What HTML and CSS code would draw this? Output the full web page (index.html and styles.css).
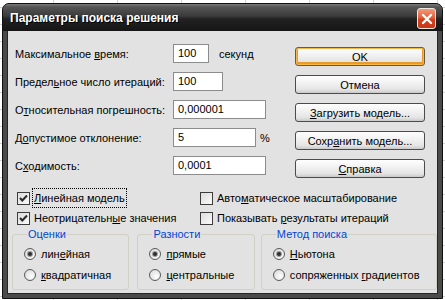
FILE: index.html
```html
<!DOCTYPE html>
<html lang="ru">
<head>
    <meta charset="UTF-8">
    <meta name="viewport" content="width=device-width, initial-scale=1.0">
    <title>Параметры поиска решения</title>
    <link rel="stylesheet" href="styles.css">
</head>
<body>

    <div class="window">
        <!-- заголовок -->
        <div class="titlebar">
            <span class="title">Параметры поиска решения</span>
            <span class="close">
                <svg width="12" height="12" viewBox="0 0 12 12"><path d="M2 2 L10 10 M10 2 L2 10" stroke="#fff" stroke-width="2.4" stroke-linecap="round"/></svg>
            </span>
        </div>

        <div class="client">
            <div class="top">
                <!-- параметры -->
                <div class="params">
                    <span class="lbl">Максимальное <u>в</u>ремя:</span>
                    <span class="field"><span class="input w36">100</span><span class="unit">секунд</span></span>

                    <span class="lbl">Предел<u>ь</u>ное число итераций:</span>
                    <span class="field"><span class="input w50">100</span></span>

                    <span class="lbl">О<u>т</u>носительная погрешность:</span>
                    <span class="field"><span class="input w93">0,000001</span></span>

                    <span class="lbl">Д<u>о</u>пустимое отклонение:</span>
                    <span class="field"><span class="input w83">5</span><span class="unit pct">%</span></span>

                    <span class="lbl">С<u>х</u>одимость:</span>
                    <span class="field"><span class="input w93">0,0001</span></span>
                </div>

                <!-- кнопки -->
                <div class="buttons">
                    <div class="btn default"><span>OK</span></div>
                    <div class="btn"><span>Отмена</span></div>
                    <div class="btn"><span><u>З</u>агрузить модель...</span></div>
                    <div class="btn"><span>Сохр<u>а</u>нить модель...</span></div>
                    <div class="btn"><span><u>С</u>правка</span></div>
                </div>
            </div>

            <!-- флажки -->
            <div class="checks">
                <div class="cb">
                    <span class="box"><svg width="11" height="11" viewBox="0 0 11 11"><path d="M2 5 L4.3 7.5 L9 2.5" fill="none" stroke="#2a2a2a" stroke-width="2"/></svg></span>
                    <span class="cb-text focus"><u>Л</u>инейная модель</span>
                </div>
                <div class="cb">
                    <span class="box"></span>
                    <span class="cb-text">Авто<u>м</u>атическое масштабирование</span>
                </div>
                <div class="cb">
                    <span class="box"><svg width="11" height="11" viewBox="0 0 11 11"><path d="M2 5 L4.3 7.5 L9 2.5" fill="none" stroke="#2a2a2a" stroke-width="2"/></svg></span>
                    <span class="cb-text">Неотрицательн<u>ы</u>е значения</span>
                </div>
                <div class="cb">
                    <span class="box"></span>
                    <span class="cb-text">Показывать <u>р</u>езультаты итераций</span>
                </div>
            </div>

            <!-- группы -->
            <div class="groups">
                <fieldset class="group g1">
                    <legend>Оценки</legend>
                    <div class="radio"><span class="dot on"></span><span>лин<u>е</u>йная</span></div>
                    <div class="radio"><span class="dot"></span><span><u>к</u>вадратичная</span></div>
                </fieldset>
                <fieldset class="group g2">
                    <legend>Разности</legend>
                    <div class="radio"><span class="dot on"></span><span><u>п</u>рямые</span></div>
                    <div class="radio"><span class="dot"></span><span><u>ц</u>ентральные</span></div>
                </fieldset>
                <fieldset class="group g3">
                    <legend>Метод поиска</legend>
                    <div class="radio"><span class="dot on"></span><span><u>Н</u>ьютона</span></div>
                    <div class="radio"><span class="dot"></span><span>сопряженных <u>г</u>радиентов</span></div>
                </fieldset>
            </div>
        </div>
    </div>

</body>
</html>
```

FILE: styles.css
```css
body {
    margin: 0;
    height: 300px;
    overflow: hidden;
    background-color: #fff;
    background-image:
        repeating-linear-gradient(90deg, transparent 0, transparent 53px, #d4d4d4 53px, #d4d4d4 54px, transparent 54px, transparent 64px),
        repeating-linear-gradient(180deg, transparent 0, transparent 7px, #d4d4d4 7px, #d4d4d4 8px, transparent 8px, transparent 17px);
    font-family: 'Liberation Sans', Arial, sans-serif;
    font-size: 11px;
    color: #000;
}

u {
    text-decoration: underline;
    text-underline-offset: 1px;
}

.window {
    width: 439px;
    height: 294px;
    margin: 3px 0 0 2px;
    border: 1px solid #101010;
    border-radius: 7px 7px 0 0;
    background: #4a4a4a;
    display: flex;
    flex-direction: column;
}

.titlebar {
    height: 27px;
    flex: none;
    display: flex;
    align-items: center;
    justify-content: space-between;
    padding: 0 6px 0 7px;
    border-radius: 6px 6px 0 0;
    background: linear-gradient(#7a7a7a 0, #555 3px, #3a3a3a 45%, #222 55%, #151515 100%);
}

.title {
    color: #fff;
    font-weight: bold;
    font-size: 12px;
    text-shadow: 1px 1px 0 #000;
    padding-top: 1px;
}

.close {
    width: 17px;
    height: 19px;
    border: 1px solid #f0e6e0;
    border-radius: 3px;
    background: linear-gradient(#f29a7c, #e2603c 45%, #d2401c 55%, #c8381a);
    display: flex;
    align-items: center;
    justify-content: center;
    margin-top: 2px;
}

.client {
    flex: 1;
    margin: 0 4px 4px;
    border: 1px solid #262626;
    border-top: none;
    background: #e2e2e2;
}

.top {
    display: flex;
    padding-left: 7px;
}

.params {
    width: 280px;
    padding-top: 13px;
    display: grid;
    grid-template-columns: 158px auto;
    grid-auto-rows: 19px;
    row-gap: 9px;
    align-items: center;
}

.field {
    display: flex;
    align-items: center;
    height: 19px;
}

.input {
    box-sizing: border-box;
    height: 19px;
    border: 1px solid #8c8c8c;
    background: #fff;
    padding: 0 4px;
    line-height: 17px;
}

.w36 { width: 36px; }
.w50 { width: 50px; }
.w93 { width: 93px; }
.w83 { width: 83px; }

.unit {
    margin-left: 10px;
}

.unit.pct {
    margin-left: 4px;
}

.buttons {
    padding-top: 16px;
    display: flex;
    flex-direction: column;
    gap: 9px;
}

.btn {
    box-sizing: border-box;
    width: 130px;
    height: 19px;
    border: 1px solid #4b4b4b;
    border-radius: 3px;
    background: linear-gradient(#fefefe, #f2f2f2 40%, #e4e4e4 80%, #c9c9c9);
    display: flex;
    align-items: center;
    justify-content: center;
}

.btn.default {
    border-color: #6a5a40;
    box-shadow: inset 0 0 0 1px #f6b84a, inset 0 -1px 0 2px #e89a2c;
}

.checks {
    margin-top: 10px;
    padding-left: 9px;
    display: grid;
    grid-template-columns: 183px auto;
    grid-auto-rows: 20px;
    align-items: center;
}

.cb {
    display: flex;
    align-items: center;
    gap: 2px;
}

.box {
    box-sizing: border-box;
    width: 13px;
    height: 13px;
    border: 1px solid #3c3c3c;
    background: linear-gradient(135deg, #dcdcdc, #fafafa);
    display: flex;
    align-items: center;
    justify-content: center;
}

.cb-text {
    line-height: 18px;
    padding: 0 1px;
    border: 1px dotted transparent;
}

.cb-text.focus {
    border-color: #000;
}

.groups {
    display: flex;
    padding-left: 4px;
    margin-top: 0;
}

.group {
    margin: 0;
    padding: 2px 0 4px 11px;
    border: 1px solid #d0d0c6;
    border-radius: 3px;
}

.group legend {
    color: #0046d5;
    padding: 0 1px;
    margin-left: 3px;
    line-height: 13px;
}

.g1 { width: 112px; margin-right: 8px; }
.g2 { width: 112px; margin-right: 6px; }
.g3 { width: 175px; }

.radio {
    height: 21px;
    display: flex;
    align-items: center;
    gap: 5px;
}

.dot {
    box-sizing: border-box;
    width: 12px;
    height: 12px;
    border: 1px solid #5a5a5a;
    border-radius: 50%;
    background: radial-gradient(circle at 65% 65%, #ffffff, #d4d4d4);
    display: flex;
    align-items: center;
    justify-content: center;
}

.dot.on::after {
    content: "";
    width: 4px;
    height: 4px;
    border-radius: 50%;
    background: #303030;
    box-shadow: 0 0 0 1px #9a9a9a;
}
```
